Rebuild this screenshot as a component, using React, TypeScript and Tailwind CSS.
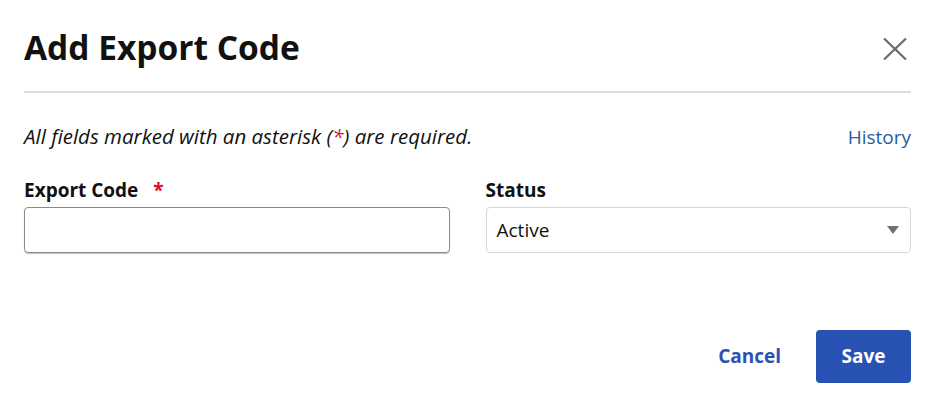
import React from "react";

export default function App() {
  return (
    <div
      className="w-[936px] h-[420px] bg-white pl-6 pr-[25px] text-[#111]"
      style={{ fontFamily: '"Open Sans", "Noto Sans", sans-serif' }}
    >
      <div className="flex items-start justify-between h-[93px] border-b-2 border-[#dddddd]">
        <h1 className="text-[33.5px] font-bold leading-[34px] pt-[30px] box-content">Add Export Code</h1>
        <button className="mt-[38px] mr-[4px]" aria-label="Close">
          <svg width="24" height="22" viewBox="0 0 24 22" fill="none" className="block">
            <path d="M1 0.5 L23 21.5 M23 0.5 L1 21.5" stroke="#6b6b6b" strokeWidth="2.2" />
          </svg>
        </button>
      </div>
      <div className="flex items-baseline justify-between mt-[30px]">
        <p className="italic text-[20.5px] leading-[26px]">
          All fields marked with an asterisk (<span className="text-[#d0112b]">*</span>) are required.
        </p>
        <a className="text-[19px] leading-[26px] text-[#2a5aa4]">History</a>
      </div>
      <div className="grid grid-cols-2 gap-[36px] mt-[28px]">
        <div className="flex flex-col">
          <label className="text-[19px] font-bold leading-[24px] mb-[5px]">
            Export Code <span className="text-[#d0112b] ml-[10px]">*</span>
          </label>
          <input className="h-[46px] rounded-[4px] border border-[#8a8a8a] shadow-[0_1px_1px_rgba(0,0,0,0.25)] px-3 outline-none" />
        </div>
        <div className="flex flex-col">
          <label className="text-[19px] font-bold leading-[24px] mb-[5px]">Status</label>
          <div className="relative h-[46px] rounded-[4px] border border-[#d6d6d6] flex items-center pl-[10px] text-[19px]">
            Active
            <svg className="absolute right-[11px] top-[18px]" width="12" height="8" viewBox="0 0 12 8">
              <path d="M0 0 H12 L6 8 Z" fill="#707070" />
            </svg>
          </div>
        </div>
      </div>
      <div className="flex justify-end items-center mt-[77px] gap-[35px]">
        <button className="text-[19px] font-bold text-[#2a52b2]">Cancel</button>
        <button className="w-[95px] h-[53px] rounded-[4px] bg-[#2851b4] text-white text-[19px] font-bold">Save</button>
      </div>
    </div>
  );
}
